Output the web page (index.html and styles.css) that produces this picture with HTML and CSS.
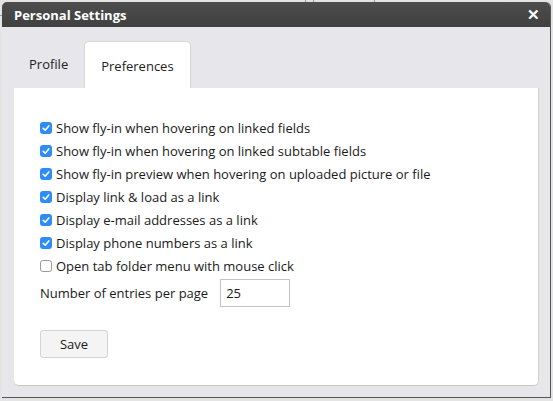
FILE: index.html
```
<!DOCTYPE html>
<html>
<head>
<meta charset="utf-8">
<link rel="stylesheet" href="styles.css">
</head>
<body>
<div class="backdrop">
  <div class="bg-line"></div>
  <div class="bg-search"></div>
</div>
<div class="dialog">
  <div class="header">
    <span class="title">Personal Settings</span>
    <span class="close">✕</span>
  </div>
  <div class="tabs">
    <div class="tab">Profile</div>
    <div class="tab active">Preferences</div>
  </div>
  <div class="panel">
    <div class="options">
      <label class="row"><span class="cb on"><svg viewBox="0 0 12 12" width="12" height="12"><path d="M3.2 6.3 L5.2 8.2 L8.8 3.9" fill="none" stroke="#fff" stroke-width="1.6" stroke-linecap="round" stroke-linejoin="round"/></svg></span>Show fly-in when hovering on linked fields</label>
      <label class="row"><span class="cb on"><svg viewBox="0 0 12 12" width="12" height="12"><path d="M3.2 6.3 L5.2 8.2 L8.8 3.9" fill="none" stroke="#fff" stroke-width="1.6" stroke-linecap="round" stroke-linejoin="round"/></svg></span>Show fly-in when hovering on linked subtable fields</label>
      <label class="row"><span class="cb on"><svg viewBox="0 0 12 12" width="12" height="12"><path d="M3.2 6.3 L5.2 8.2 L8.8 3.9" fill="none" stroke="#fff" stroke-width="1.6" stroke-linecap="round" stroke-linejoin="round"/></svg></span>Show fly-in preview when hovering on uploaded picture or file</label>
      <label class="row"><span class="cb on"><svg viewBox="0 0 12 12" width="12" height="12"><path d="M3.2 6.3 L5.2 8.2 L8.8 3.9" fill="none" stroke="#fff" stroke-width="1.6" stroke-linecap="round" stroke-linejoin="round"/></svg></span>Display link &amp; load as a link</label>
      <label class="row"><span class="cb on"><svg viewBox="0 0 12 12" width="12" height="12"><path d="M3.2 6.3 L5.2 8.2 L8.8 3.9" fill="none" stroke="#fff" stroke-width="1.6" stroke-linecap="round" stroke-linejoin="round"/></svg></span>Display e-mail addresses as a link</label>
      <label class="row"><span class="cb on"><svg viewBox="0 0 12 12" width="12" height="12"><path d="M3.2 6.3 L5.2 8.2 L8.8 3.9" fill="none" stroke="#fff" stroke-width="1.6" stroke-linecap="round" stroke-linejoin="round"/></svg></span>Display phone numbers as a link</label>
      <label class="row"><span class="cb"></span>Open tab folder menu with mouse click</label>
      <div class="row entries">
        <span>Number of entries per page</span>
        <input class="num" type="text" value="25">
      </div>
    </div>
    <button class="save">Save</button>
  </div>
</div>
</body>
</html>
```

FILE: styles.css
```
html, body {
  margin: 0;
  padding: 0;
}
body {
  width: 553px;
  height: 401px;
  background: #dcdcdc;
  font-family: "Open Sans", "Liberation Sans", sans-serif;
  font-size: 13px;
  color: #222;
  position: relative;
  overflow: hidden;
}
.backdrop {
  position: absolute;
  inset: 0;
  background: #e4e4e4;
}
.bg-line {
  position: absolute;
  left: 0;
  top: 0;
  width: 305px;
  height: 15px;
  border-right: 1px solid #999;
  border-bottom: 1px solid #999;
}
.bg-search {
  position: absolute;
  left: 313px;
  top: -6px;
  width: 60px;
  height: 21px;
  border: 1px solid #999;
  border-radius: 4px;
}
.dialog {
  position: relative;
  margin: 2px 0 0 2px;
  width: 548px;
  height: 395px;
  background: #e7e6eb;
  border-right: 1px solid #555;
  border-bottom: 1px solid #555;
  border-radius: 5px 5px 0 0;
  display: flex;
  flex-direction: column;
}
.header {
  height: 25px;
  flex: none;
  background: linear-gradient(rgba(52,52,52,0.86), rgba(46,46,46,0.9));
  border-radius: 5px 5px 0 0;
  color: #fff;
  font-weight: 700;
  font-size: 13px;
  display: flex;
  align-items: center;
  justify-content: space-between;
  padding: 0 10px 0 12px;
}
.close {
  font-size: 15px;
  font-weight: 700;
  line-height: 1;
}
.tabs {
  display: flex;
  margin: 14px 0 0 12px;
  height: 47px;
  flex: none;
}
.tab {
  padding: 0 16px 2px 15px;
  display: flex;
  align-items: center;
  font-size: 13px;
  color: #222;
}
.active {
  background: #fff;
  border: 1px solid #d6d6d6;
  border-bottom: none;
  border-radius: 5px 5px 0 0;
  padding: 2px 16px 0 16px;
}
.panel {
  flex: 1;
  margin: 0 11px 11px 12px;
  background: #fff;
  border-bottom: 1px solid #c8c8c8;
  border-right: 1px solid #d0d0d0;
  border-radius: 0 0 5px 5px;
  padding: 28px 0 0 26px;
}
.options {
  display: flex;
  flex-direction: column;
}
.row {
  height: 23px;
  display: flex;
  align-items: center;
  white-space: nowrap;
  color: #1a1a1a;
}
.cb {
  width: 12px;
  height: 12px;
  border-radius: 3px;
  box-sizing: border-box;
  border: 1px solid #9a9a9a;
  background: #fff;
  margin-right: 4px;
  display: inline-flex;
  flex: none;
}
.cb.on {
  border: none;
  background: #2d8cf6;
}
.entries {
  height: 28px;
  margin-top: 2px;
}
.num {
  margin-left: 12px;
  width: 70px;
  height: 28px;
  box-sizing: border-box;
  border: 1px solid #c4c4c4;
  font-family: "Open Sans", "Liberation Sans", sans-serif;
  font-size: 13px;
  padding: 0 5px;
  color: #1a1a1a;
  outline: none;
}
.save {
  margin-top: 23px;
  width: 68px;
  height: 28px;
  background: #f4f4f4;
  border: 1px solid #d4d4d4;
  border-radius: 3px;
  font-family: "Open Sans", "Liberation Sans", sans-serif;
  font-size: 13px;
  color: #1a1a1a;
}
```
